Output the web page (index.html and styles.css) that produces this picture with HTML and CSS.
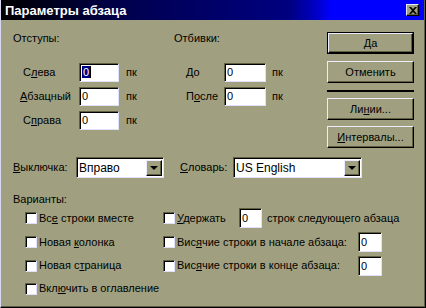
FILE: index.html
```html
<!DOCTYPE html>
<html lang="ru">
<head>
  <meta charset="UTF-8">
  <title>Параметры абзаца</title>
  <link rel="stylesheet" href="styles.css">
</head>
<body>
  <div class="window">
    <div class="titlebar">
      <span class="title">Параметры абзаца</span>
      <span class="close">
        <svg width="8" height="7" viewBox="0 0 8 7"><path d="M0 0h2l2 2 2-2h2L5 3.5 8 7H6L4 5 2 7H0l3-3.5z" fill="#000"/></svg>
      </span>
    </div>

    <div class="content">
      <div class="top">
        <div class="groups">
          <!-- Отступы -->
          <div class="group indents">
            <div class="heading">Отступы:</div>
            <div class="row first">
              <span class="label">С<u>л</u>ева</span>
              <span class="field"><span class="sel">0</span></span>
              <span class="unit">пк</span>
            </div>
            <div class="row">
              <span class="label wide"><u>А</u>бзацный</span>
              <span class="field">0</span>
              <span class="unit">пк</span>
            </div>
            <div class="row">
              <span class="label">С<u>п</u>рава</span>
              <span class="field">0</span>
              <span class="unit">пк</span>
            </div>
          </div>

          <!-- Отбивки -->
          <div class="group spacing">
            <div class="heading">Отбивки:</div>
            <div class="row first">
              <span class="label"><u>Д</u>о</span>
              <span class="field">0</span>
              <span class="unit">пк</span>
            </div>
            <div class="row">
              <span class="label">П<u>о</u>сле</span>
              <span class="field">0</span>
              <span class="unit">пк</span>
            </div>
          </div>
        </div>

        <div class="actions">
          <div class="btn default"><span>Да</span></div>
          <div class="btn">Отменить</div>
          <div class="separator"></div>
          <div class="btn"><span>Ли<u>н</u>ии...</span></div>
          <div class="btn next"><span><u>И</u>нтервалы...</span></div>
        </div>
      </div>

      <div class="selects">
        <span class="sel-label align"><u>В</u>ыключка:</span>
        <div class="select align-box">
          <span class="value">Вправо</span>
          <span class="arrow"></span>
        </div>
        <span class="sel-label dict"><u>С</u>ловарь:</span>
        <div class="select dict-box">
          <span class="value">US English</span>
          <span class="arrow"></span>
        </div>
      </div>

      <div class="options">
        <div class="heading">Варианты:</div>
        <div class="opt-grid">
          <div class="opt"><span class="check"></span><span>Вс<u>е</u> строки вместе</span></div>
          <div class="opt">
            <span class="check"></span>
            <span class="opt-label short"><u>У</u>держать</span>
            <span class="field small">0</span>
            <span class="after">строк следующего абзаца</span>
          </div>

          <div class="opt"><span class="check"></span><span>Новая <u>к</u>олонка</span></div>
          <div class="opt">
            <span class="check"></span>
            <span class="opt-label long">Вис<u>я</u>чие строки в начале абзаца:</span>
            <span class="field small">0</span>
          </div>

          <div class="opt"><span class="check"></span><span>Новая с<u>т</u>раница</span></div>
          <div class="opt">
            <span class="check"></span>
            <span class="opt-label long">Вис<u>я</u>чие строки в конце абзаца:</span>
            <span class="field small">0</span>
          </div>

          <div class="opt"><span class="check"></span><span>Вкл<u>ю</u>чить в оглавление</span></div>
        </div>
      </div>
    </div>
  </div>
</body>
</html>
```

FILE: styles.css
```css
body {
  margin: 0;
  font-family: "Liberation Sans", Arial, sans-serif;
  font-size: 11px;
  line-height: 13px;
  color: #000;
}

u {
  text-underline-offset: 1px;
}

.window {
  width: 426px;
  height: 308px;
  box-sizing: border-box;
  background-color: #a0a080;
  border-left: 1px solid #d8d8f4;
  border-right: 1px solid #000;
  border-bottom: 1px solid #000;
  box-shadow: inset -1px -1px 0 #606040;
}

/* Заголовок окна */
.titlebar {
  height: 20px;
  margin-right: 1px;
  padding: 0 5px 0 4px;
  display: flex;
  justify-content: space-between;
  align-items: center;
  background: linear-gradient(90deg, #000000 0%, #000050 30%, #000080 68%, #0000c0 74%, #0000ff 78%, #0000ff 100%);
  color: white;
}

.title {
  font-weight: bold;
  font-size: 13px;
}

.close {
  width: 13px;
  height: 12px;
  box-sizing: border-box;
  display: flex;
  justify-content: center;
  align-items: center;
  background-color: #a0a080;
  border: 1px solid;
  border-color: #e8e8ff #000 #000 #e8e8ff;
  box-shadow: inset -1px -1px 0 #606040;
}

.content {
  padding: 12px 0 0 12px;
}

.top {
  display: flex;
}

.groups {
  display: flex;
  width: 314px;
}

.heading {
  height: 13px;
}

.indents {
  width: 161px;
}

.row {
  display: flex;
  align-items: center;
  height: 19px;
  margin-top: 5px;
}

.row.first {
  margin-top: 18px;
}

.indents .label {
  width: 66px;
  padding-left: 10px;
  box-sizing: border-box;
}

.indents .label.wide {
  padding-left: 7px;
}

.spacing .label {
  width: 50px;
  padding-left: 12px;
  box-sizing: border-box;
}

.field {
  width: 40px;
  height: 19px;
  box-sizing: border-box;
  padding: 2px 0 0 2px;
  background-color: white;
  border: 1px solid;
  border-color: #606040 #e0e0fc #e0e0fc #606040;
  box-shadow: inset 1px 1px 0 #000;
}

.spacing .field {
  width: 42px;
}

.sel {
  background-color: #000080;
  color: white;
  padding: 0 1px;
  box-shadow: 1px 0 0 #000;
}

.unit {
  margin-left: 7px;
}

.spacing .unit {
  margin-left: 6px;
}

/* Кнопки справа */
.actions {
  width: 87px;
  display: flex;
  flex-direction: column;
}

.btn {
  height: 22px;
  box-sizing: border-box;
  display: flex;
  justify-content: center;
  align-items: center;
  margin-top: 7px;
  border: 1px solid;
  border-color: #ececff #000 #000 #ececff;
  box-shadow: inset -1px -1px 0 #606040;
}

.btn.default {
  margin-top: 0;
  border: 1px solid #000;
  box-shadow: none;
}

.btn.default span {
  flex: 1;
  align-self: stretch;
  display: flex;
  justify-content: center;
  align-items: center;
  border: 1px solid;
  border-color: #ececff #000 #000 #ececff;
  box-shadow: inset -1px -1px 0 #606040;
}

.btn.next {
  margin-top: 6px;
}

.separator {
  height: 2px;
  margin-top: 7px;
  margin-bottom: -1px;
  background-color: #000;
}

/* Выпадающие списки */
.selects {
  display: flex;
  align-items: center;
  margin-top: 9px;
  height: 21px;
}

.sel-label.align {
  width: 63px;
}

.sel-label.dict {
  width: 53px;
  margin-left: 16px;
}

.select {
  height: 21px;
  box-sizing: border-box;
  display: flex;
  align-items: center;
  justify-content: space-between;
  padding: 1px 1px 1px 2px;
  background-color: white;
  border: 1px solid;
  border-color: #606040 #e0e0fc #e0e0fc #606040;
  box-shadow: inset 1px 1px 0 #000;
}

.align-box {
  width: 88px;
}

.dict-box {
  width: 129px;
}

.value {
  font-size: 12px;
  padding-top: 1px;
}

.arrow {
  width: 16px;
  height: 16px;
  box-sizing: border-box;
  display: flex;
  justify-content: center;
  align-items: center;
  background-color: #a0a080;
  border: 1px solid;
  border-color: #ececff #000 #000 #ececff;
  box-shadow: inset -1px -1px 0 #606040;
}

.arrow::after {
  content: "";
  border-left: 4px solid transparent;
  border-right: 4px solid transparent;
  border-top: 4px solid #000;
  margin-top: 1px;
}

/* Варианты */
.options {
  margin-top: 15px;
}

.opt-grid {
  display: grid;
  grid-template-columns: 138px auto;
  grid-template-rows: 24px 24px 23px 23px;
  padding-left: 12px;
}

.opt {
  display: flex;
  align-items: center;
}

.check {
  width: 12px;
  height: 12px;
  box-sizing: border-box;
  margin-right: 2px;
  background-color: white;
  border: 1px solid;
  border-color: #606040 #e0e0fc #e0e0fc #606040;
  box-shadow: inset 1px 1px 0 #000;
}

.opt-label.short {
  width: 62px;
}

.opt-label.long {
  width: 181px;
}

.field.small {
  width: 23px;
  height: 20px;
  padding-top: 3px;
}

.opt-label.long + .field.small {
  width: 24px;
}

.after {
  margin-left: 5px;
}
```
